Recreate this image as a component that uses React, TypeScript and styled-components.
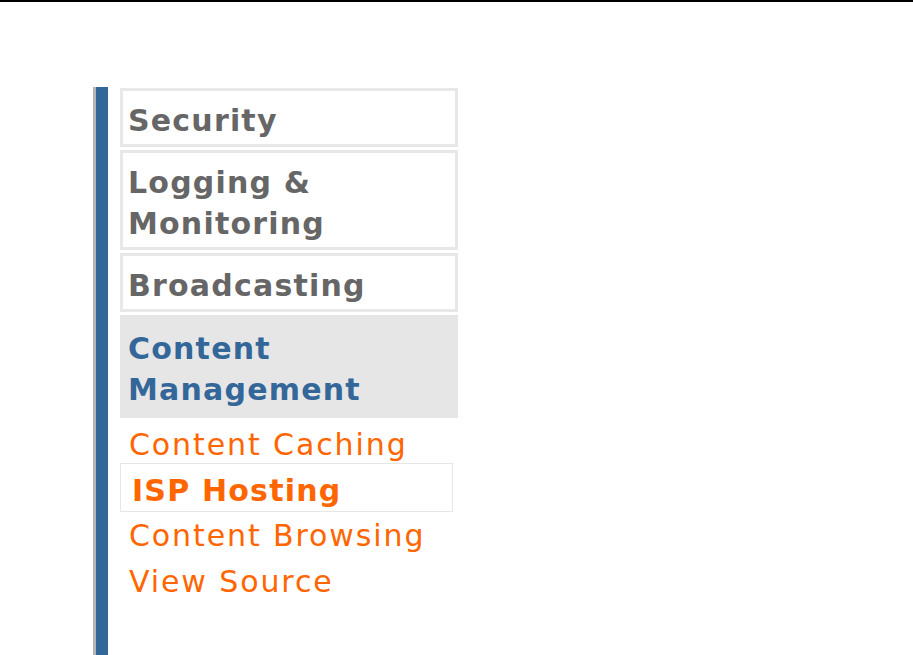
import styled, { createGlobalStyle } from 'styled-components';

const GlobalStyle = createGlobalStyle`
  html, body {
    margin: 0;
    padding: 0;
    background: #ffffff;
  }
  body {
    font-family: "DejaVu Sans", Verdana, sans-serif;
  }
`;

type Section = { label: string; active?: boolean };

const sections: Section[] = [
  { label: 'Security' },
  { label: 'Logging & Monitoring' },
  { label: 'Broadcasting' },
  { label: 'Content Management', active: true },
];

const subItems = [
  { label: 'Content Caching' },
  { label: 'ISP Hosting', current: true },
  { label: 'Content Browsing' },
  { label: 'View Source' },
];

export default function App() {
  return (
    <>
      <GlobalStyle />
      <TopRule />
      <Page>
        <Sidebar>
          <Accent>
            <Menu>
              {sections.map((s) => (
                <SectionBox key={s.label} $active={s.active}>
                  {s.label}
                </SectionBox>
              ))}
              <SubList>
                {subItems.map((item) => (
                  <SubItem key={item.label} $current={item.current}>
                    {item.label}
                  </SubItem>
                ))}
              </SubList>
            </Menu>
          </Accent>
        </Sidebar>
      </Page>
    </>
  );
}

const TopRule = styled.div`
  height: 2px;
  background: #000000;
`;

const Page = styled.div`
  padding: 85px 0 0 93px;
  height: calc(100vh - 87px);
`;

const Sidebar = styled.div`
  height: 100%;
  width: 365px;
  border-left: 3px solid #b4b4b4;
  box-sizing: border-box;
`;

const Accent = styled.div`
  height: 100%;
  border-left: 12px solid #336699;
  padding-left: 12px;
`;

const Menu = styled.div`
  width: 338px;
  padding-top: 1px;
  display: flex;
  flex-direction: column;
  gap: 3px;
`;

const SectionBox = styled.div<{ $active?: boolean }>`
  box-sizing: border-box;
  border: 3px solid ${(p) => (p.$active ? '#e6e6e6' : '#e8e8e8')};
  background: ${(p) => (p.$active ? '#e6e6e6' : '#ffffff')};
  padding: ${(p) => (p.$active ? '10px 5px 5px 5px' : '9px 5px 3px 5px')};
  font-size: 30px;
  font-weight: bold;
  letter-spacing: 1.2px;
  line-height: 41px;
  color: ${(p) => (p.$active ? '#336699' : '#666666')};
`;

const SubList = styled.div`
  display: flex;
  flex-direction: column;
  padding-top: 1px;
`;

const SubItem = styled.div<{ $current?: boolean }>`
  box-sizing: border-box;
  width: ${(p) => (p.$current ? '333px' : 'auto')};
  border: 1px solid ${(p) => (p.$current ? '#e6e6e6' : 'transparent')};
  margin: ${(p) => (p.$current ? '-5px 0 1px' : '0')};
  padding: ${(p) => (p.$current ? '6px 8px 0 11px' : '0 8px 0 8px')};
  font-size: 30px;
  line-height: ${(p) => (p.$current ? '41px' : '44px')};
  letter-spacing: ${(p) => (p.$current ? '1.2px' : '1.9px')};
  font-weight: ${(p) => (p.$current ? 'bold' : 'normal')};
  color: #ff6600;
`;
